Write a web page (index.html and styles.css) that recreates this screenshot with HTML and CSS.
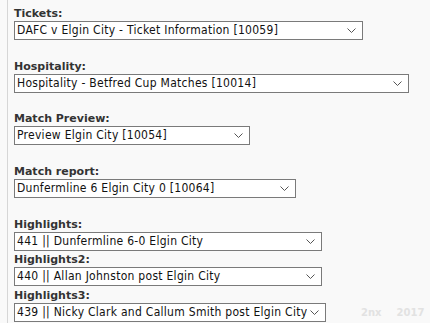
FILE: index.html
```html
<!DOCTYPE html>
<html lang="en">
<head>
    <meta charset="UTF-8">
    <meta name="viewport" content="width=device-width, initial-scale=1.0">
    <title>Match Links</title>
    <link rel="stylesheet" href="styles.css">
</head>
<body>

    <div class="panel">
        <div class="field">
            <label class="field-label" for="tickets">Tickets:</label>
            <select id="tickets" class="pick w-tickets">
                <option>DAFC v Elgin City - Ticket Information [10059]</option>
            </select>
        </div>

        <div class="field">
            <label class="field-label" for="hospitality">Hospitality:</label>
            <select id="hospitality" class="pick w-hospitality">
                <option>Hospitality - Betfred Cup Matches [10014]</option>
            </select>
        </div>

        <div class="field">
            <label class="field-label" for="preview">Match Preview:</label>
            <select id="preview" class="pick w-preview">
                <option>Preview Elgin City [10054]</option>
            </select>
        </div>

        <div class="field">
            <label class="field-label" for="report">Match report:</label>
            <select id="report" class="pick w-report">
                <option>Dunfermline 6 Elgin City 0 [10064]</option>
            </select>
        </div>

        <div class="field field-tight">
            <label class="field-label" for="hl1">Highlights:</label>
            <select id="hl1" class="pick w-hl">
                <option>441 || Dunfermline 6-0 Elgin City</option>
            </select>
        </div>

        <div class="field field-tight">
            <label class="field-label" for="hl2">Highlights2:</label>
            <select id="hl2" class="pick w-hl">
                <option>440 || Allan Johnston post Elgin City</option>
            </select>
        </div>

        <div class="field field-tight">
            <label class="field-label" for="hl3">Highlights3:</label>
            <div class="last-row">
                <select id="hl3" class="pick w-hl3">
                    <option>439 || Nicky Clark and Callum Smith post Elgin City</option>
                </select>
                <span class="stamp"><span>2nx</span><span>2017</span></span>
            </div>
        </div>
    </div>

</body>
</html>
```

FILE: styles.css
```css
body {
    margin: 0;
    padding: 0;
    background-color: #f9f9f9;
    font-family: "DejaVu Sans", Verdana, sans-serif;
    color: #222;
}
.panel {
    margin-left: 7px;
    border-left: 1px solid #d6d6d6;
    padding: 6px 0 0 6px;
    min-height: 317px;
}
.field {
    margin-bottom: 18.7px;
}
.field-tight {
    margin-bottom: 1.5px;
}
.field-label {
    display: block;
    font-size: 11px;
    font-weight: bold;
    line-height: 15px;
    color: #333;
}
.pick {
    display: block;
    appearance: none;
    -webkit-appearance: none;
    box-sizing: border-box;
    height: 19px;
    margin: 0;
    padding: 0 18px 0 2px;
    border: 1px solid #7a7a7a;
    border-radius: 0;
    background-color: #fff;
    background-image: url("data:image/svg+xml,%3Csvg xmlns='http://www.w3.org/2000/svg' width='9' height='5'%3E%3Cpath d='M0.5 0.5 L4.5 4.5 L8.5 0.5' fill='none' stroke='%23555' stroke-width='1'/%3E%3C/svg%3E");
    background-repeat: no-repeat;
    background-position: right 6px center;
    font-family: "DejaVu Sans Condensed", "DejaVu Sans", Verdana, sans-serif;
    font-stretch: condensed;
    font-size: 12px;
    letter-spacing: 0.28px;
    color: #111;
    line-height: 17px;
}
.w-tickets { width: 349px; }
.w-hospitality { width: 395px; }
.w-preview { width: 236px; }
.w-report { width: 282px; }
.w-hl { width: 308px; }
.w-hl3 { width: 312px; }
.last-row {
    display: flex;
    align-items: center;
}
.stamp {
    display: flex;
    gap: 15px;
    margin-left: 35px;
    font-size: 10px;
    font-weight: bold;
    color: #e2e2e2;
}
```
